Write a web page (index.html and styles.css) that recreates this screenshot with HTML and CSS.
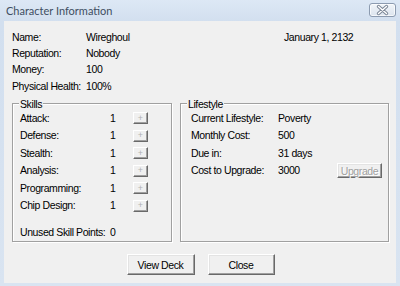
FILE: index.html
```html
<!DOCTYPE html>
<html>
<head>
<meta charset="utf-8">
<link rel="stylesheet" href="styles.css">
</head>
<body>
<div class="window">
  <div class="titlebar">
    <span class="title">Character Information</span>
    <button class="close" aria-label="Close">
      <svg width="27" height="14" viewBox="0 0 27 14">
        <path d="M9.5 3.5 L17.5 10.5 M17.5 3.5 L9.5 10.5" stroke="#7b8696" stroke-width="3.4" stroke-linecap="round" fill="none"/>
        <path d="M9.5 3.5 L17.5 10.5 M17.5 3.5 L9.5 10.5" stroke="#ffffff" stroke-width="1.4" stroke-linecap="round" fill="none"/>
      </svg>
    </button>
  </div>
  <div class="client">
    <div class="top">
      <div class="info">
        <span>Name:</span><span>Wireghoul</span>
        <span>Reputation:</span><span>Nobody</span>
        <span>Money:</span><span>100</span>
        <span>Physical Health:</span><span>100%</span>
      </div>
      <div class="date">January 1, 2132</div>
    </div>
    <div class="groups">
      <fieldset class="group skills">
        <legend>Skills</legend>
        <div class="rows">
          <span>Attack:</span><span>1</span><button class="plus" disabled>+</button>
          <span>Defense:</span><span>1</span><button class="plus" disabled>+</button>
          <span>Stealth:</span><span>1</span><button class="plus" disabled>+</button>
          <span>Analysis:</span><span>1</span><button class="plus" disabled>+</button>
          <span>Programming:</span><span>1</span><button class="plus" disabled>+</button>
          <span>Chip Design:</span><span>1</span><button class="plus" disabled>+</button>
        </div>
        <div class="rows unused">
          <span>Unused Skill Points:</span><span>0</span>
        </div>
      </fieldset>
      <fieldset class="group lifestyle">
        <legend>Lifestyle</legend>
        <div class="rows">
          <span>Current Lifestyle:</span><span>Poverty</span><span></span>
          <span>Monthly Cost:</span><span>500</span><span></span>
          <span>Due in:</span><span>31 days</span><span></span>
          <span>Cost to Upgrade:</span><span>3000</span><button class="btn upgrade" disabled>Upgrade</button>
        </div>
      </fieldset>
    </div>
    <div class="actions">
      <button class="btn action deck">View Deck</button>
      <button class="btn action">Close</button>
    </div>
  </div>
</div>
</body>
</html>
```
FILE: styles.css
```css
* { box-sizing: border-box; }
html, body { margin: 0; padding: 0; }
body {
  width: 400px;
  height: 286px;
  overflow: hidden;
  font-family: "Liberation Sans", Arial, sans-serif;
  font-size: 10.5px;
  letter-spacing: -0.4px;
  color: #000;
  white-space: nowrap;
}
.window {
  width: 400px;
  height: 286px;
  background: linear-gradient(#dde8f5, #d2dfef 21px, #d9e4f1);
  display: flex;
  flex-direction: column;
}
.titlebar {
  height: 21px;
  display: flex;
  align-items: flex-start;
  padding: 0 4px 0 6px;
}
.title {
  font-family: Lato, "Noto Sans", sans-serif;
  font-size: 11px;
  letter-spacing: 0;
  line-height: 21px;
  color: #3f4e61;
}
.close {
  margin: 3px 0 0 auto;
  width: 27px;
  height: 14px;
  padding: 0;
  border: 1px solid #8c9bb0;
  border-radius: 3px;
  background: linear-gradient(#f1f5f9, #dce4ee);
  box-shadow: inset 0 0 0 1px rgba(255,255,255,0.7);
  display: block;
}
.close svg { display: block; margin: -1px; }
.client {
  margin: 0 4px;
  height: 262px;
  background: #f0f0f0;
  padding: 8px 7px 0 8px;
}
.top { display: flex; }
.info {
  width: 272px;
  display: grid;
  grid-template-columns: 74px auto;
  grid-auto-rows: 16.4px;
  align-items: center;
  line-height: 13px;
}
.date { line-height: 16.4px; }
.groups {
  display: flex;
  gap: 8px;
  margin-top: 3px;
}
.group {
  margin: 0;
  padding: 0;
  min-width: 0;
  border: 1px solid #a0a0a0;
  box-shadow: inset 1px 1px #fff, 1px 1px #fff;
}
.group legend {
  padding: 0 1px;
  margin-left: 6px;
  line-height: 12px;
  background: #f0f0f0;
}
.skills { width: 160px; }
.lifestyle { width: 209px; }
.rows {
  display: grid;
  grid-auto-rows: 17.5px;
  align-items: center;
  line-height: 13px;
}
.skills .rows {
  grid-template-columns: 90px 23px 15px;
  padding-left: 7px;
}
.skills .unused { margin-top: 9px; }
.lifestyle .rows {
  grid-template-columns: 87px 1fr auto;
  padding: 0 6px 0 10px;
}
.plus {
  width: 15px;
  height: 12px;
  padding: 0;
  font-family: "Liberation Sans", Arial, sans-serif;
  font-size: 9px;
  line-height: 9px;
  color: #b0b0b0;
  background: #f0f0f0;
  border: 1px solid;
  border-color: #fff #696969 #696969 #fff;
  box-shadow: inset -1px -1px #a0a0a0;
}
.btn {
  font: inherit;
  letter-spacing: inherit;
  padding: 0;
  color: #000;
  background: #f0f0f0;
  border: 1px solid;
  border-color: #fff #696969 #696969 #fff;
  box-shadow: inset -1px -1px #a0a0a0, inset 1px 1px #e3e3e3;
}
.upgrade {
  width: 45px;
  height: 15px;
  line-height: 12px;
  color: #a0a0a0;
  text-shadow: 1px 1px #fff;
}
.actions {
  display: flex;
  justify-content: center;
  gap: 13px;
  margin-top: 12px;
}
.action { width: 67px; height: 21px; }
.deck { width: 68px; }
```
